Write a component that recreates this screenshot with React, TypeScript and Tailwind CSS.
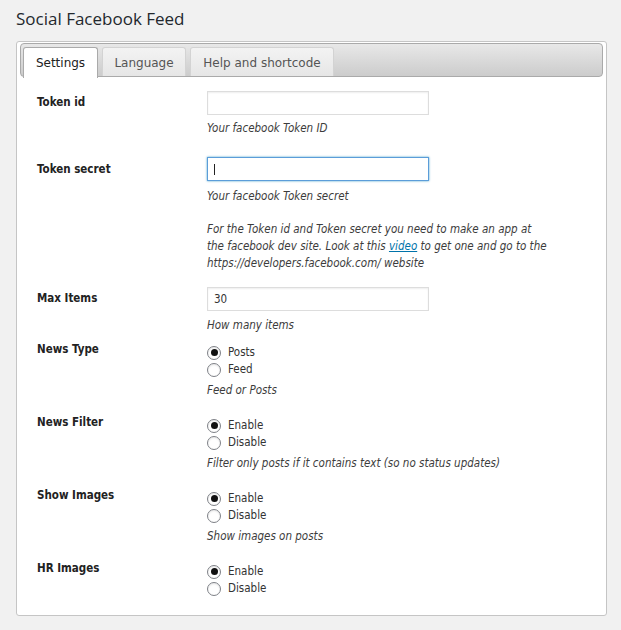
import React from "react";

function Radio({ label, checked }: { label: string; checked?: boolean }) {
  return (
    <div className="flex items-center h-[17px]">
      <span className="flex items-center justify-center w-[14px] h-[14px] rounded-full border border-[#7e8187] bg-white shadow-[inset_0_1px_2px_rgba(0,0,0,0.1)]">
        {checked && <span className="block w-[7px] h-[7px] rounded-full bg-[#111]" />}
      </span>
      <span className="ml-[7px] text-[#333]">{label}</span>
    </div>
  );
}

function Desc({ children, className = "" }: { children: React.ReactNode; className?: string }) {
  return <div className={"italic text-[#3c3c3c] leading-[15px] whitespace-nowrap " + className}>{children}</div>;
}

function Input({ value, focused }: { value?: string; focused?: boolean }) {
  return (
    <div
      className={
        "w-[222px] h-[24px] flex items-center pl-[6px] bg-white border " +
        (focused
          ? "border-[#5b9dd9] shadow-[0_0_2px_rgba(30,140,190,0.8)]"
          : "border-[#dddddd] shadow-[inset_0_1px_2px_rgba(0,0,0,0.07)]")
      }
    >
      {value && <span className="text-[#333] leading-[15px]">{value}</span>}
      {focused && <span className="block w-[1px] h-[11px] bg-[#222]" />}
    </div>
  );
}

function Label({ children, className = "" }: { children: React.ReactNode; className?: string }) {
  return <div className={"w-[170px] shrink-0 font-bold text-[#222] leading-[15px] " + className}>{children}</div>;
}

function RadioRow({ label, options, desc, className = "" }: { label: string; options: string[]; desc?: string; className?: string }) {
  return (
    <div className={"flex " + className}>
      <Label className="-mt-[1px]">{label}</Label>
      <div className="pt-[1px]">
        {options.map((o, i) => (
          <Radio key={o} label={o} checked={i === 0} />
        ))}
        {desc && <Desc className="mt-[5px]">{desc}</Desc>}
      </div>
    </div>
  );
}

export default function App() {
  return (
    <div className="min-h-screen w-full bg-[#f1f1f1] pb-[16px] font-['DejaVu_Sans_Condensed',sans-serif] text-[11.5px]">
      <h1 className="pt-[7px] pl-[16px] leading-[24px] text-[17px] font-normal text-[#23282d] font-['Open_Sans',sans-serif]">
        Social Facebook Feed
      </h1>
      <div className="mt-[10px] ml-[16px] w-[591px] border border-[#c5c5c5] rounded-[3px] bg-white px-[3px] pt-[1px] pb-[18px]">
        <div className="h-[34px] border border-[#aaaaaa] rounded-[4px] bg-gradient-to-b from-[#e8e8e8] to-[#cccccc] flex items-start gap-[4px] pl-[2px] pt-[3px] font-['DejaVu_Sans',sans-serif] text-[12px]">
          <div className="w-[75px] h-[31px] shrink-0 border border-b-0 border-[#aaaaaa] rounded-t-[3px] bg-white text-center pt-[8px] leading-[14px] text-[#212121]">
            Settings
          </div>
          <div className="w-[84px] h-[29px] shrink-0 border border-b-0 border-[#d3d3d3] rounded-t-[3px] bg-gradient-to-b from-[#f3f3f3] to-[#e6e6e6] text-center pt-[8px] leading-[14px] text-[#555]">
            Language
          </div>
          <div className="w-[144px] h-[29px] shrink-0 border border-b-0 border-[#d3d3d3] rounded-t-[3px] bg-gradient-to-b from-[#f3f3f3] to-[#e6e6e6] text-center pt-[8px] leading-[14px] text-[#555]">
            Help and shortcode
          </div>
        </div>

        <div className="pl-[17px] pt-[14px]">
          {/* Token id */}
          <div className="flex">
            <Label className="pt-[4px]">Token id</Label>
            <div>
              <Input />
              <Desc className="mt-[6px]">Your facebook Token ID</Desc>
            </div>
          </div>

          {/* Token secret */}
          <div className="flex mt-[21px]">
            <Label className="pt-[5px]">Token secret</Label>
            <div>
              <Input focused />
              <Desc className="mt-[8px]">Your facebook Token secret</Desc>
              <Desc className="mt-[17px] leading-[17px]">
                For the Token id and Token secret you need to make an app at
                <br />
                the facebook dev site. Look at this{" "}
                <a href="#" className="text-[#0073aa] underline">
                  video
                </a>{" "}
                to get one and go to the
                <br />
                https://developers.facebook.com/ website
              </Desc>
            </div>
          </div>

          {/* Max Items */}
          <div className="flex mt-[15px]">
            <Label className="pt-[4px]">Max Items</Label>
            <div>
              <Input value="30" />
              <Desc className="mt-[7px]">How many items</Desc>
            </div>
          </div>

          <RadioRow className="mt-[10px]" label="News Type" options={["Posts", "Feed"]} desc="Feed or Posts" />
          <RadioRow
            className="mt-[18px]"
            label="News Filter"
            options={["Enable", "Disable"]}
            desc="Filter only posts if it contains text (so no status updates)"
          />
          <RadioRow className="mt-[18px]" label="Show Images" options={["Enable", "Disable"]} desc="Show images on posts" />
          <RadioRow className="mt-[18px]" label="HR Images" options={["Enable", "Disable"]} />
        </div>
      </div>
    </div>
  );
}
